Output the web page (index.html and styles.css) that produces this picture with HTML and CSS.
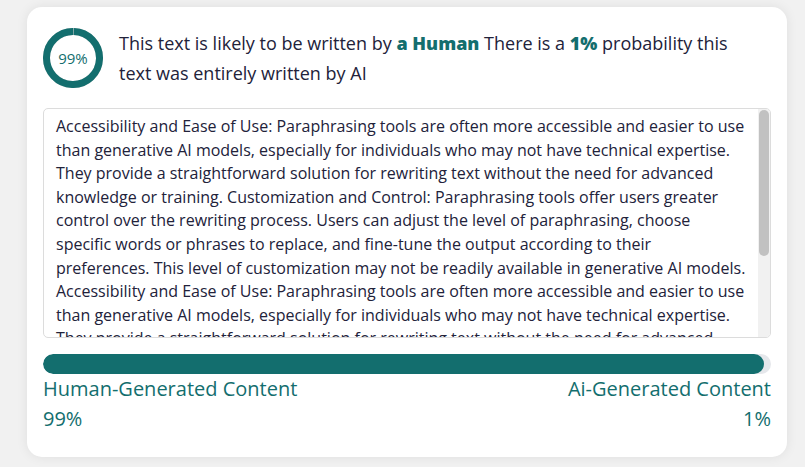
FILE: index.html
```html
<!DOCTYPE html>
<html lang="en">
<head>
    <meta charset="UTF-8">
    <meta name="viewport" content="width=device-width, initial-scale=1.0">
    <title>AI Content Detector</title>
    <link rel="stylesheet" href="styles.css">
</head>
<body>
    <div class="card">
        <div class="result-head">
            <div class="score-ring">
                <svg width="60" height="60" viewBox="0 0 60 60">
                    <circle cx="30" cy="30" r="26.5" fill="none" stroke="#c9c9c9" stroke-width="7"/>
                    <circle cx="30" cy="30" r="26.5" fill="none" stroke="#136e6e" stroke-width="7"
                        stroke-dasharray="164.8 166.5" transform="rotate(-88 30 30)"/>
                </svg>
                <span class="score-value">99%</span>
            </div>
            <p class="result-text">
                This text is likely to be written by <strong>a Human</strong> There is a <strong>1%</strong> probability this text was entirely written by AI
            </p>
        </div>

        <div class="text-box">
            <div class="text-content">Accessibility and Ease of Use: Paraphrasing tools are often more accessible and easier to use than generative AI models, especially for individuals who may not have technical expertise. They provide a straightforward solution for rewriting text without the need for advanced knowledge or training. Customization and Control: Paraphrasing tools offer users greater control over the rewriting process. Users can adjust the level of paraphrasing, choose specific words or phrases to replace, and fine-tune the output according to their preferences. This level of customization may not be readily available in generative AI models. Accessibility and Ease of Use: Paraphrasing tools are often more accessible and easier to use than generative AI models, especially for individuals who may not have technical expertise. They provide a straightforward solution for rewriting text without the need for advanced knowledge or training. Customization and Control: Paraphrasing tools offer users greater control over the rewriting process. Users can adjust the level of paraphrasing, choose specific words or phrases to replace, and fine-tune the output according to their preferences. This level of customization may not be readily available in generative AI models.</div>
            <div class="scroll-track">
                <div class="scroll-thumb"></div>
            </div>
        </div>

        <div class="progress">
            <div class="progress-fill" style="width: 99%"></div>
        </div>
        <div class="legend">
            <div class="legend-item">
                <div class="legend-label">Human-Generated Content</div>
                <div class="legend-value">99%</div>
            </div>
            <div class="legend-item right">
                <div class="legend-label">Ai-Generated Content</div>
                <div class="legend-value">1%</div>
            </div>
        </div>
    </div>
</body>
</html>
```

FILE: styles.css
```css
body {
    font-family: 'Open Sans', sans-serif;
    margin: 0;
    padding: 7px 18px 10px 27px;
    background-color: #f1f1f1;
}
.card {
    width: 728px;
    height: 418px;
    background: #fff;
    padding: 21px 16px 11px 16px;
    border-radius: 15px;
    box-shadow: 0 0 12px rgba(0, 0, 0, 0.08);
}
.result-head {
    display: flex;
    align-items: flex-start;
    gap: 16px;
}
.score-ring {
    position: relative;
    width: 60px;
    height: 60px;
    flex-shrink: 0;
}
.score-ring svg {
    display: block;
}
.score-value {
    position: absolute;
    top: 0;
    left: 0;
    width: 60px;
    line-height: 60px;
    text-align: center;
    font-size: 15px;
    color: #136e6e;
}
.result-text {
    margin: 0;
    padding-right: 24px;
    font-size: 18px;
    line-height: 30px;
    color: #22223a;
}
.result-text strong {
    color: #136e6e;
    font-weight: 800;
}
.text-box {
    display: flex;
    margin-top: 20px;
    height: 228px;
    border: 1px solid #dcdcdc;
    border-radius: 5px;
    overflow: hidden;
}
.text-content {
    flex: 1;
    padding: 6px 10px 0 12px;
    font-size: 16px;
    line-height: 23.6px;
    color: #22223a;
    overflow: hidden;
}
.scroll-track {
    width: 10px;
    padding: 1px;
    background: #f1f1f1;
}
.scroll-thumb {
    height: 146px;
    background: #c1c1c1;
    border-radius: 5px;
}
.progress {
    margin-top: 16px;
    height: 20px;
    background: #e5e7eb;
    border-radius: 10px;
    overflow: hidden;
}
.progress-fill {
    height: 100%;
    background: #136e6e;
    border-radius: 10px;
}
.legend {
    display: flex;
    justify-content: space-between;
    color: #136e6e;
}
.legend-item.right {
    text-align: right;
}
.legend-label {
    font-size: 20px;
    line-height: 30px;
}
.legend-value {
    font-size: 20px;
    line-height: 30px;
}
```
